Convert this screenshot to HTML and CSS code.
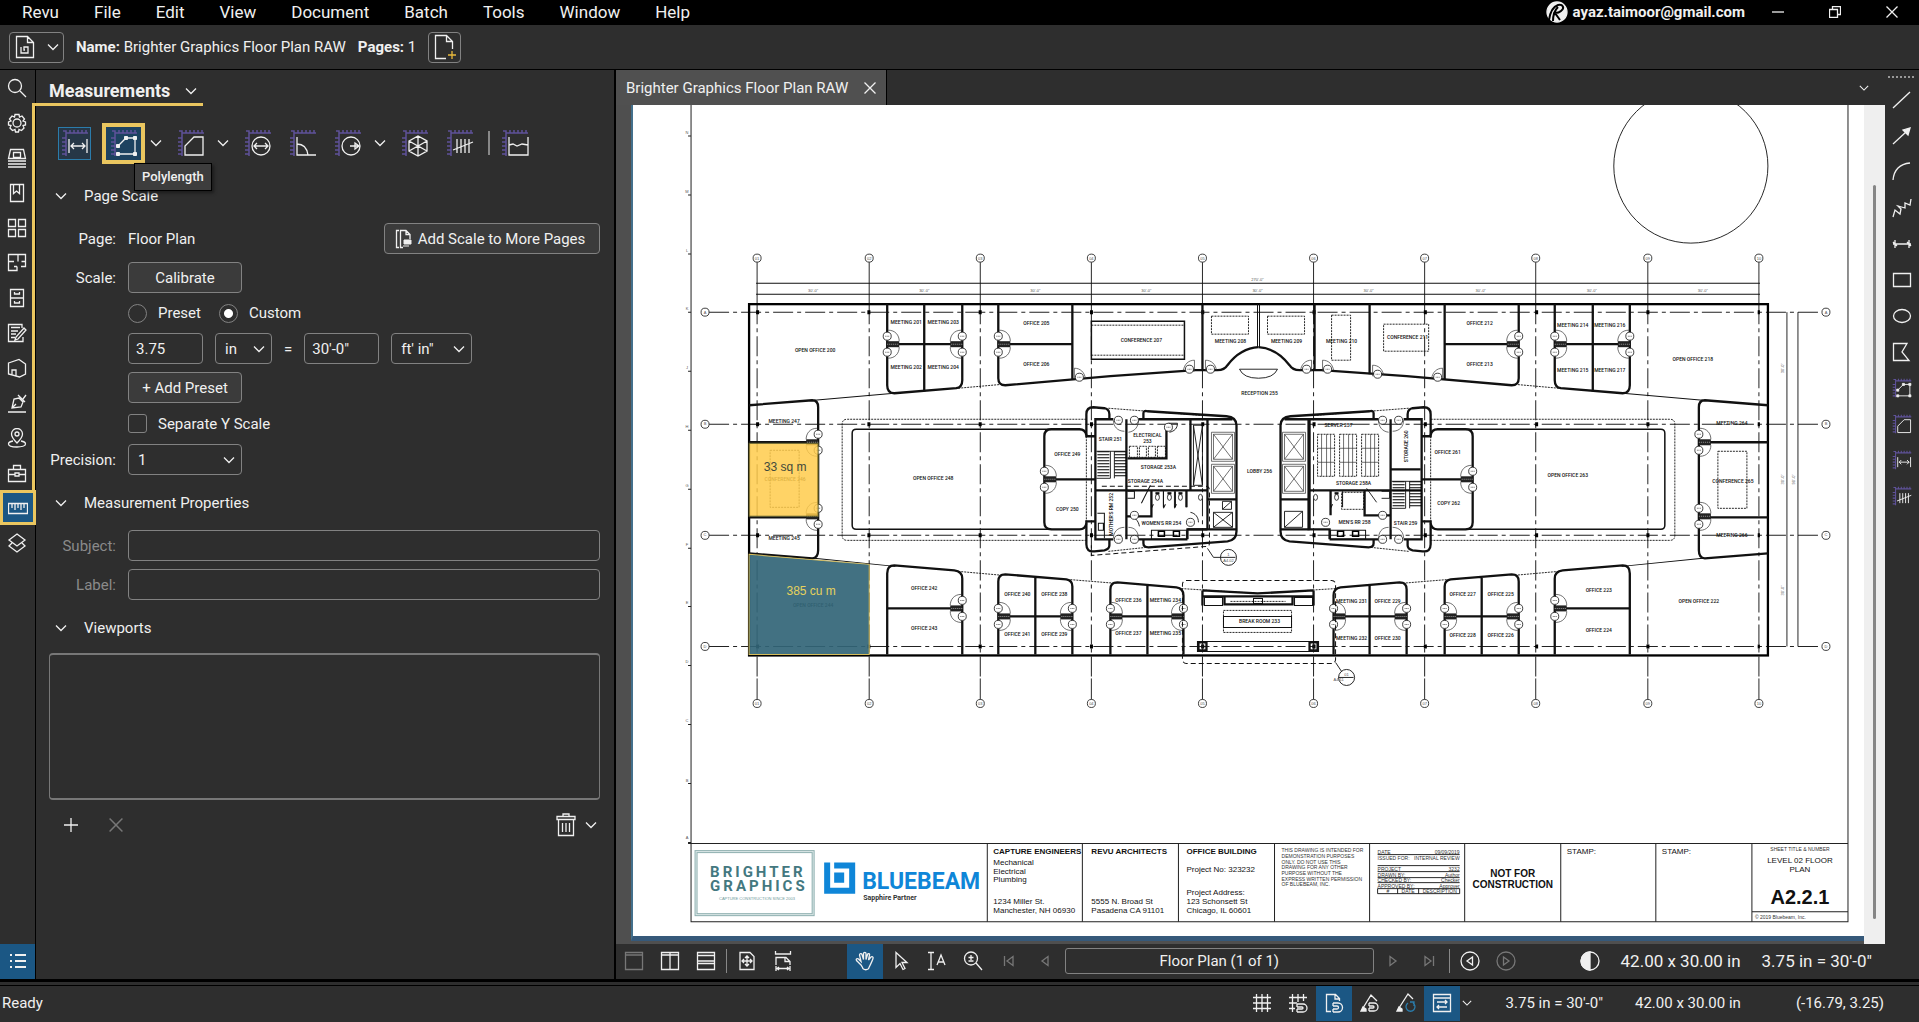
FILE: index.html
```html
<!DOCTYPE html>
<html lang="en">
<head>
    <meta charset="UTF-8">
    <meta name="viewport" content="width=device-width, initial-scale=1.0">
    <title>Brighter Graphics Floor Plan RAW</title>
    <link rel="stylesheet" href="styles.css">
</head>
<body>

    <!-- shared icons -->
    <svg class="sprite" width="0" height="0" aria-hidden="true">
        <symbol id="chevron" viewBox="0 0 12 12"><path d="M1 3.5l5 5 5-5"/></symbol>
        <symbol id="close" viewBox="0 0 12 12"><path d="M0.5 0.5l11 11M11.5 0.5l-11 11"/></symbol>
        <symbol id="ruler" viewBox="0 0 28 28">
            <path class="ruler" d="M5 27V4h22M1 9h4M1 13h4M1 17h4M1 21h4M1 25h4M9 4V1M13 4V1M17 4V1M21 4V1M25 4V1M2 2h3v3"/>
        </symbol>
        <symbol id="i-length" viewBox="0 0 28 28"><use href="#ruler"/><path d="M8 10v14M26 10v14M10 17h14M13 14l-3 3 3 3M21 14l3 3-3 3"/></symbol>
        <symbol id="i-poly" viewBox="0 0 28 28"><use href="#ruler"/><path d="M8 17l8-8h9v16H9"/><path class="solid small" d="M6.500 15.500h3v3h-3zM14.500 7.500h3v3h-3zM23.500 7.500h3v3h-3zM23.500 23.500h3v3h-3zM6.500 23.500h3v3h-3z"/></symbol>
        <symbol id="i-area" viewBox="0 0 28 28"><use href="#ruler"/><path d="M8 26V17l9-9h9v18z"/></symbol>
        <symbol id="i-diameter" viewBox="0 0 28 28"><use href="#ruler"/><circle cx="17" cy="17" r="9"/><path d="M10 17h14M13 14l-3 3 3 3M21 14l3 3-3 3"/></symbol>
        <symbol id="i-angle" viewBox="0 0 28 28"><use href="#ruler"/><path d="M8 8v18h19M8 15c6 0 10 4 11 11"/></symbol>
        <symbol id="i-radius" viewBox="0 0 28 28"><use href="#ruler"/><circle cx="17" cy="17" r="9"/><path d="M16 17h9M21 14l4 3-4 3z"/></symbol>
        <symbol id="i-volume" viewBox="0 0 28 28"><use href="#ruler"/><path d="M8 12l9-5 9 5v10l-9 5-9-5zM8 12l9 5 9-5M17 7v20M8 22l9-5 9 5"/></symbol>
        <symbol id="i-count" viewBox="0 0 28 28"><use href="#ruler"/><path d="M11 10v14M15 10v14M19 10v14M23 10v14M7 21l20-8"/></symbol>
        <symbol id="i-cutout" viewBox="0 0 28 28"><use href="#ruler"/><path d="M8 8v18h19V8M8 16l4-1 4 2 5-2 6 1"/></symbol>
    </svg>

    <header class="menubar">
        <nav class="menus">
            <button>Revu</button>
            <button>File</button>
            <button>Edit</button>
            <button>View</button>
            <button>Document</button>
            <button>Batch</button>
            <button>Tools</button>
            <button>Window</button>
            <button>Help</button>
        </nav>
        <div class="account">
            <svg width="22" height="22" viewBox="0 0 22 22"><circle class="solid" cx="11" cy="11" r="10"/><path class="cut" d="M3 19C4 12 6 6 12 4c5-1 7 3 3 6-2 2-5 2-6 2l5 7M7 20c0-6 2-11 5-14"/></svg>
            <span>ayaz.taimoor@gmail.com</span>
        </div>
        <div class="window-buttons">
            <button aria-label="Minimize"><svg width="12" height="12" viewBox="0 0 12 12"><path d="M0 6h12"/></svg></button>
            <button aria-label="Restore"><svg width="12" height="12" viewBox="0 0 12 12"><path d="M0.5 3.5h8v8h-8zM3.5 3.5v-3h8v8h-3"/></svg></button>
            <button aria-label="Close"><svg width="12" height="12"><use href="#close"/></svg></button>
        </div>
    </header>

    <div class="filebar">
        <button class="box file-type" aria-label="File type">
            <svg width="20" height="24" viewBox="0 0 20 24"><path d="M1.500 1.500h11l6 6v15h-17zM12.500 1.500v6h6M6 12v6h7v-6h-4v3h1"/></svg>
            <svg width="12" height="12"><use href="#chevron"/></svg>
        </button>
        <p><b>Name:</b> Brighter Graphics Floor Plan RAW</p>
        <p><b>Pages:</b> 1</p>
        <button class="box new-page" aria-label="New page">
            <svg width="22" height="26" viewBox="0 0 22 26"><path d="M12 24.500H1.500V1.500h11l6 6V15M12.500 1.500v6h6"/><path class="plus" d="M18 17v8M14 21h8"/></svg>
        </button>
    </div>

    <main class="workspace">
        <nav class="rail">
            <button aria-label="Search"><svg viewBox="0 0 20 20"><circle cx="8" cy="8" r="6.500"/><path d="M13 13l6 6"/></svg></button>
            <button aria-label="Properties"><svg viewBox="0 0 20 20"><circle cx="10" cy="10" r="4"/><path d="M8 1.500h4l.5 2.500 2.500-1 2.500 3-1.500 2 2.500 1v3l-2.500.5 1 2.500-2.500 2.500-2.500-1L11.500 19h-3L8 16.500l-2.500 1L3 15l1-2.500L1.500 12V9L4 8 2.500 6 5 3l2.500 1z"/></svg></button>
            <button aria-label="Properties sheet"><svg viewBox="0 0 20 20"><path d="M3.500 1.500h13l2 9h-17zM6.500 4.500h7v5h-7zM1 13h18M1 16h18M1 19h18"/></svg></button>
            <button aria-label="Bookmarks"><svg viewBox="0 0 20 20"><path d="M3.500 1.500h13v17h-13zM6.500 1.500v9l3-2.500 3 2.500v-9"/></svg></button>
            <button aria-label="Thumbnails"><svg viewBox="0 0 20 20"><path d="M1.500 1.500h7v7h-7zM11.500 1.500h7v7h-7zM1.500 11.500h7v7h-7zM11.500 11.500h7v7h-7z"/></svg></button>
            <button aria-label="Spaces"><svg viewBox="0 0 20 20"><path d="M7 8.500H1.500v-7h17v12H14M11 1.500v7M1.500 8.500v9H10v-4M7 13.500h3M14.500 8.500h4"/></svg></button>
            <button aria-label="File access"><svg viewBox="0 0 20 20"><path d="M3.500 1.500h13v17h-13zM3.500 10h13M7.500 4v2h5V4M7.500 13v2h5v-2"/></svg></button>
            <button aria-label="Markups"><svg viewBox="0 0 20 20"><path d="M15 5V1.500H1.500v17H16V14M4 4.500h9M4 8h7M4 11h5M4 14.500h4M17 5l2 2-8 9-3 1 1-3z"/></svg></button>
            <button aria-label="Forms"><svg viewBox="0 0 20 20"><path d="M1.500 5L12 1.500 18.500 6v10l-6 3-11-3zM5 17v-5h4v6"/></svg></button>
            <button aria-label="Signatures"><svg viewBox="0 0 20 20"><path d="M1 19h18M5 15l2-9 5-1 4 4-2 5zM5 15l4-4M11 2l7 7M16 6l3-4"/></svg></button>
            <button aria-label="Location"><svg viewBox="0 0 20 20"><path d="M10 15C6 11 4.500 8 4.500 6a5.500 5.500 0 0111 0c0 2-1.500 5-5.500 9zM6 13c-3 .5-4.500 1.500-4.500 3 0 4 17 4 17 0 0-1.500-1.500-2.500-4.500-3"/><circle cx="10" cy="6" r="2"/></svg></button>
            <button aria-label="Tool chest"><svg viewBox="0 0 20 20"><path d="M1.500 6.500h17v12h-17zM6.500 6.500v-4h7v4M1.500 11.500H8M12 11.500h6.500M8 10h4v3H8z"/></svg></button>
            <button class="active" aria-label="Measurements"><svg viewBox="0 0 20 20"><path d="M0.500 5.500h19v10H0.500zM4 6v4M7 6v6M10 6v4M13 6v6M16 6v4"/></svg></button>
            <button aria-label="Layers"><svg viewBox="0 0 20 20"><path d="M10 1l8 6-8 6-8-6zM5 10l-3 3 8 6 8-6-3-3"/></svg></button>
            <button class="list" aria-label="Markups list"><svg viewBox="0 0 20 20"><path class="bold" d="M2 4h2M7 4h11M2 10h2M7 10h11M2 16h2M7 16h11"/></svg></button>
        </nav>

        <section class="panel">
            <h1>Measurements <svg width="12" height="12"><use href="#chevron"/></svg></h1>

            <div class="tools">
                <button class="tool picked" aria-label="Length"><svg width="28" height="28"><use href="#i-length"/></svg></button>
                <button class="tool marked" aria-label="Polylength"><svg width="28" height="28"><use href="#i-poly"/></svg></button>
                <svg class="more" width="12" height="12"><use href="#chevron"/></svg>
                <button class="tool" aria-label="Area"><svg width="28" height="28"><use href="#i-area"/></svg></button>
                <svg class="more" width="12" height="12"><use href="#chevron"/></svg>
                <button class="tool" aria-label="Diameter"><svg width="28" height="28"><use href="#i-diameter"/></svg></button>
                <button class="tool" aria-label="Angle"><svg width="28" height="28"><use href="#i-angle"/></svg></button>
                <button class="tool" aria-label="Radius"><svg width="28" height="28"><use href="#i-radius"/></svg></button>
                <svg class="more" width="12" height="12"><use href="#chevron"/></svg>
                <button class="tool" aria-label="Volume"><svg width="28" height="28"><use href="#i-volume"/></svg></button>
                <button class="tool" aria-label="Count"><svg width="28" height="28"><use href="#i-count"/></svg></button>
                <i class="sep"></i>
                <button class="tool" aria-label="Cutout"><svg width="28" height="28"><use href="#i-cutout"/></svg></button>
                <span class="tooltip">Polylength</span>
            </div>

            <h2><svg width="12" height="12"><use href="#chevron"/></svg>Page Scale</h2>
            <div class="form">
                <span class="name">Page:</span>
                <div class="line spread">
                    <span>Floor Plan</span>
                    <button class="box add-scale">
                        <svg width="18" height="20" viewBox="0 0 18 20"><path d="M4 1.500H1.500v17H4M8 18.500H5.500v-17H11l4 4V10M11 1.500v4h4"/><path class="solid small" d="M9 11h7v4H9zM8 17h6"/></svg>
                        Add Scale to More Pages
                    </button>
                </div>

                <span class="name">Scale:</span>
                <div class="line"><button class="box wide">Calibrate</button></div>

                <div class="line radios">
                    <label><input type="radio" name="scale"> Preset</label>
                    <label><input type="radio" name="scale" checked> Custom</label>
                </div>

                <div class="line scale-values">
                    <input class="field" type="text" value="3.75" aria-label="Page distance">
                    <span class="select in">
                        <select aria-label="Page unit"><option>in</option></select>
                        <svg width="12" height="12"><use href="#chevron"/></svg>
                    </span>
                    <span>=</span>
                    <input class="field" type="text" value="30'-0&quot;" aria-label="Real distance">
                    <span class="select ft">
                        <select aria-label="Real unit"><option>ft' in"</option></select>
                        <svg width="12" height="12"><use href="#chevron"/></svg>
                    </span>
                </div>

                <div class="line"><button class="box wide">+ Add Preset</button></div>

                <div class="line check"><label><input type="checkbox"> Separate Y Scale</label></div>

                <label class="name" for="precision">Precision:</label>
                <div class="line">
                    <span class="select wide">
                        <select id="precision"><option>1</option></select>
                        <svg width="12" height="12"><use href="#chevron"/></svg>
                    </span>
                </div>
            </div>

            <h2><svg width="12" height="12"><use href="#chevron"/></svg>Measurement Properties</h2>
            <div class="form">
                <label class="name off" for="subject">Subject:</label>
                <input class="field" id="subject" type="text">
                <label class="name off" for="label">Label:</label>
                <input class="field" id="label" type="text">
            </div>

            <h2><svg width="12" height="12"><use href="#chevron"/></svg>Viewports</h2>
            <div class="viewports"></div>
            <div class="viewport-tools">
                <button aria-label="Add viewport"><svg width="14" height="14" viewBox="0 0 14 14"><path d="M7 0v14M0 7h14"/></svg></button>
                <button class="off" aria-label="Remove viewport"><svg width="14" height="14"><use href="#close"/></svg></button>
                <button class="trash" aria-label="Delete">
                    <svg width="20" height="24" viewBox="0 0 20 24"><path d="M1 3.500h18v3H1zM7 3.500V1h6v2.500M2.500 7v15.500h15V7M6.500 10v9M10 10v9M13.500 10v9"/></svg>
                    <svg width="12" height="12"><use href="#chevron"/></svg>
                </button>
            </div>
        </section>

        <section class="document">
            <div class="tabs">
                <div class="tab">Brighter Graphics Floor Plan RAW
                    <button aria-label="Close tab"><svg width="12" height="12"><use href="#close"/></svg></button>
                </div>
                <button class="tab-list" aria-label="Tabs"><svg width="10" height="10"><use href="#chevron"/></svg></button>
            </div>

            <div class="view">
                <div class="sheet">
                    <svg class="plan" viewBox="633 105 1230 830" preserveAspectRatio="xMinYMin meet">
                        <defs>
                            <!-- pair of doors, wall on the left -->
                            <g id="doors">
                                <path class="thin" d="M1 -14c7 0 11 5 11 11M1 14c7 0 11-5 11-11"/>
                                <path class="wall gap" d="M0 -12v8M0 4v8"/>
                                <rect class="slab" x="0" y="-3" width="12" height="6"/>
                                <path class="slab-mark" d="M0 0h12"/>
                                <circle class="tag" cx="0" cy="-8" r="4"/>
                                <circle class="tag" cx="0" cy="8" r="4"/>
                                <path class="mark" d="M-2 -8h4M-2 8h4"/>
                            </g>
                            <g id="door">
                                <path class="thin" d="M0 -11V0M0 -11c6 0 10 4 11 10"/>
                                <circle class="tag" cx="5" cy="-2" r="4"/>
                                <path class="mark" d="M3 -2h4"/>
                            </g>
                            <g id="tag"><circle class="tag" cx="0" cy="0" r="4"/><path class="mark" d="M-2 0h4"/></g>
                            <g id="lift"><path class="thin" d="M0 0h23v29H0zM2 2h19v25H2zM2 2l19 25M21 2L2 27"/></g>
                            <g id="stairs">
                                <path class="steps" d="M7 0v27"/>
                                <path class="steps" d="M24 0v27"/>
                                <path class="thin dark" d="M14 0v27M18 0v27M0 27h14M0 0h29"/>
                            </g>
                            <g id="wc"><path class="line" d="M-6 0v16M6 0v16M-4 13l-2 4"/><ellipse class="tag" cx="0" cy="6" rx="2" ry="3"/><path class="wall" d="M-2 2h4"/></g>
                            <g id="rack"><path class="dots" d="M0 0h17v42H0z"/><path class="thin" d="M4 0v42M13 0v42M0 14h17M0 28h17M9 0v42"/></g>

                            <!-- half of the building; the other half is its mirror -->
                            <g id="half">
                                <path class="wall" d="M887 304V385q0 8 7 8L956 388q6-1 6-8V304M998 304V378q0 7 7 7L1110 376 1195 370H1217Q1224 370 1227 365 1240 348 1258 347"/>
                                <path class="wall" d="M924 304V391M887 344H962M998 344H1072M1072 304V379M1202 304V370"/>
                                <path class="wall" d="M749 405L812 400q6 0 6 7V550q0 8-6 8L749 553"/>
                                <path class="wall" d="M749 442H818M749 517H818"/>
                                <path class="line" d="M814 400L894 393M814 558L895 566M1257 304V347"/>
                                <path class="dots" d="M958 388L1003 384M958 571L1003 575M1067 579L1116 583M1178 588L1257 593"/>
                                <path class="wall" d="M887 654V573q0-8 7-8L954 570q8 1 8 8V654M998 654V581q0-7 7-7L1066 579q6 1 6 7V654M1035 577V654M998 616H1072"/>
                                <path class="wall" d="M1110 654V589q0-7 7-7L1176 587q7 1 7 8V654M1147 585V654M1110 616H1183"/>
                                <path class="frame" d="M1051 429H856q-4 0-4 4V525q0 4 4 4H1051"/>
                                <path class="dots" d="M1086 419H847q-5 0-5 5V535q0 5 5 5H1086M1086 430V530"/>
                                <path class="wall" d="M1086 435q-1-6-7-6H1051q-7 0-7 7V522q0 7 7 7H1079q6 0 7-6M1044 479H1095"/>
                                <path class="wall" d="M1095 436H1086V414q0-7 7-7L1104 408q5 1 5 6V419M1143 419V413q0-3 4-2L1226 416q10 1 10 9V531q0 9-9 10L1148 547q-5 0-5-4V539"/>
                                <path class="wall" d="M1095 521H1086V544q0 8 8 7L1104 550q5-1 5-5V539"/>
                                <path class="dots" d="M1108 408L1200 415M1108 551L1146 547"/>
                                <path class="wall" d="M1138 419H1190M1113 419H1095V539H1113M1138 539H1187M1126 419V539M1190 419H1232M1187 539V529H1236M1095 490H1208M1207 419V530M1207 499H1236"/>
                                <use href="#lift" x="1211" y="432"/>
                                <use href="#lift" x="1211" y="464"/>
                                <use href="#doors" x="1044" y="479"/>
                                <use href="#doors" x="998" y="344"/>
                                <use href="#doors" x="887" y="344"/>
                                <use href="#doors" transform="translate(962 344) scale(-1 1)"/>
                                <use href="#doors" transform="translate(818 442) scale(-1 1)"/>
                                <use href="#doors" transform="translate(818 516) scale(-1 1)"/>
                                <path class="wall" d="M887 608H962"/>
                                <use href="#doors" transform="translate(962 608) scale(-1 1)"/>
                                <use href="#doors" x="998" y="616"/>
                                <use href="#doors" transform="translate(1072 616) scale(-1 1)"/>
                                <use href="#doors" x="1110" y="616"/>
                                <use href="#doors" transform="translate(1183 616) scale(-1 1)"/>
                                <use href="#door" x="1074" y="379"/>
                                <use href="#door" transform="translate(1194 371) scale(-1 1)"/>
                                <use href="#door" x="1205" y="371"/>
                                <path class="thin" d="M1113 420c0 6 4 11 11 11M1138 420c0 6-3 11-10 12M1113 538c0-6 4-11 11-11M1138 538c0-6-3-11-10-11"/>
                                <use href="#tag" x="1118" y="420"/><use href="#tag" x="1134" y="420"/>
                                <use href="#tag" x="1118" y="539"/><use href="#tag" x="1134" y="539"/>
                                <path class="line" d="M1151 530h35v9h-35z"/>
                                <path class="sink" d="M1158 531h6v5h-6zM1173 531h6v5h-6z"/>
                            </g>
                        </defs>

                        <!-- sheet border -->
                        <path class="border" d="M691 105V921H1847V105"/>
                        <path class="border" d="M688 136h3M688 195h3M688 254h3M688 312h3M688 371h3M688 430h3M688 489h3M688 548h3M688 606h3M688 665h3M688 724h3M688 783h3M688 842h3"/>
                        <g class="tiny">
                            <text x="687" y="134">N</text><text x="687" y="193">M</text><text x="687" y="252">L</text>
                            <text x="687" y="310">K</text><text x="687" y="369">J</text><text x="687" y="428">H</text>
                            <text x="687" y="487">G</text><text x="687" y="546">F</text><text x="687" y="604">E</text>
                            <text x="687" y="663">D</text><text x="687" y="722">C</text><text x="687" y="781">B</text>
                            <text x="687" y="838">A</text>
                        </g>
                        <circle class="thin dark" cx="1690" cy="166" r="77"/>

                        <!-- column grid -->
                        <path class="thin dark" d="M757 262V303M869 262V303M980 262V303M1091 262V303M1202 262V303M1313 262V303M1424 262V303M1535 262V303M1647 262V303M1758 262V303M757 678V699M869 678V699M980 678V699M1091 678V699M1202 678V699M1313 678V699M1424 678V699M1535 678V699M1647 678V699M1758 678V699"/>
                        <path class="axis" d="M757 304V678M869 304V678M980 304V678M1091 304V678M1202 304V678M1313 304V678M1424 304V678M1535 304V678M1647 304V678M1758 304V678"/>
                        <path class="axis" d="M709 312H1821M709 424H1821M709 535H1821M709 646H1821"/>
                        <path class="line" d="M756 283H1759M756 294H1759"/>
                        <path class="thin dark" d="M1786 312V646M1797 312V646"/>
                        <g class="bubbles">
                            <circle cx="757" cy="258" r="4"/><circle cx="869" cy="258" r="4"/><circle cx="980" cy="258" r="4"/><circle cx="1091" cy="258" r="4"/><circle cx="1202" cy="258" r="4"/>
                            <circle cx="1313" cy="258" r="4"/><circle cx="1424" cy="258" r="4"/><circle cx="1535" cy="258" r="4"/><circle cx="1647" cy="258" r="4"/><circle cx="1758" cy="258" r="4"/>
                            <circle cx="757" cy="703" r="4"/><circle cx="869" cy="703" r="4"/><circle cx="980" cy="703" r="4"/><circle cx="1091" cy="703" r="4"/><circle cx="1202" cy="703" r="4"/>
                            <circle cx="1313" cy="703" r="4"/><circle cx="1424" cy="703" r="4"/><circle cx="1535" cy="703" r="4"/><circle cx="1647" cy="703" r="4"/><circle cx="1758" cy="703" r="4"/>
                            <circle cx="705" cy="312" r="4"/><circle cx="705" cy="424" r="4"/><circle cx="705" cy="535" r="4"/><circle cx="705" cy="646" r="4"/>
                            <circle cx="1825" cy="312" r="4"/><circle cx="1825" cy="424" r="4"/><circle cx="1825" cy="535" r="4"/><circle cx="1825" cy="646" r="4"/>
                        </g>
                        <g class="tiny">
                            <text x="757" y="260">01</text><text x="869" y="260">02</text><text x="980" y="260">03</text><text x="1091" y="260">04</text><text x="1202" y="260">05</text>
                            <text x="1313" y="260">06</text><text x="1424" y="260">07</text><text x="1535" y="260">08</text><text x="1647" y="260">09</text><text x="1758" y="260">10</text>
                            <text x="757" y="705">01</text><text x="869" y="705">02</text><text x="980" y="705">03</text><text x="1091" y="705">04</text><text x="1202" y="705">05</text>
                            <text x="1313" y="705">06</text><text x="1424" y="705">07</text><text x="1535" y="705">08</text><text x="1647" y="705">09</text><text x="1758" y="705">10</text>
                            <text x="705" y="314">A</text><text x="705" y="425">B</text><text x="705" y="536">C</text><text x="705" y="648">D</text>
                            <text x="1825" y="314">A</text><text x="1825" y="425">B</text><text x="1825" y="536">C</text><text x="1825" y="648">D</text>
                            <text x="813" y="292">30'-0"</text><text x="924" y="292">30'-0"</text><text x="1035" y="292">30'-0"</text><text x="1146" y="292">30'-0"</text><text x="1257" y="292">30'-0"</text>
                            <text x="1368" y="292">30'-0"</text><text x="1480" y="292">30'-0"</text><text x="1591" y="292">30'-0"</text><text x="1702" y="292">30'-0"</text><text x="1257" y="281">270'-0"</text>
                            <text transform="translate(1783 368) rotate(-90)">30'-0"</text><text transform="translate(1783 479) rotate(-90)">30'-0"</text><text transform="translate(1783 590) rotate(-90)">30'-0"</text><text transform="translate(1794 479) rotate(-90)">90'-0"</text>
                        </g>
                        <path class="posts" d="M756 312h1003M756 424h1003M756 535h1003M756 646h1003"/>

                        <rect class="outer" x="749" y="304" width="1018" height="351"/>
                        <use href="#half"/>
                        <use href="#half" transform="translate(2516 0) scale(-1 1)"/>

                        <!-- top middle rooms -->
                        <path class="frame" d="M1091 321h93v38h-93z"/>
                        <path class="dots" d="M1091 325h93M1091 355h93M1211 316h37v18h-37zM1267 316h37v18h-37zM1331 315h19v45h-19zM1383 324h45v27h-45z"/>
                        <path class="wall" d="M1369 304V374"/>
                        <use href="#door" x="1372" y="376"/>
                        <path class="thin dark" d="M1239 369h38q-4 9-19 9t-19-9z"/>
                        <path class="dots" d="M1717 451h29v57h-29zM770 450h29v57h-29z"/>

                        <!-- left core -->
                        <path class="wall" d="M1190 419V490M1127 458H1166V427M1151 490V516H1126M1186 490V507M1187 529h20"/>
                        <path class="thin dark" d="M1193 425h9v60h-9zM1193 425l9 60M1202 425l-9 60M1213 512h19v15h-19zM1213 512l19 15M1232 512l-19 15M1222 501h9v8h-9zM1222 509l9-8M1168 423h9c0 5-3 8-8 9M1190 512c5 1 8 5 8 10M1128 516c6 0 10 4 11 10"/>
                        <path class="dots" d="M1129 446h8v11h-8zM1139 446h7v11h-7zM1148 446h7v11h-7zM1157 446h8v11h-8z"/>
                        <use href="#stairs" x="1096" y="451"/>
                        <use href="#wc" x="1157" y="491"/><use href="#wc" x="1169" y="491"/><use href="#wc" x="1180" y="491"/>
                        <ellipse class="tag" cx="1200" cy="497" rx="2" ry="3"/>
                        <use href="#tag" x="1168" y="427"/><use href="#tag" x="1190" y="522"/><use href="#tag" x="1134" y="515"/>
                        <path class="line" d="M1097 513h7v25M1098 523h5v7h-5zM1150 485l-9 18M1127 491h7v7h-7"/>
                        <path class="dashes" d="M1091 545V555L1207 546q2-1 2-3V490q0-4-4-4H1100"/>

                        <!-- right core -->
                        <path class="wall" d="M1308 419V530M1390 469H1420M1330 490V515M1364 490V515H1390"/>
                        <use href="#rack" x="1317" y="434"/><use href="#rack" x="1339" y="434"/><use href="#rack" x="1361" y="434"/>
                        <use href="#stairs" x="1391" y="481"/>
                        <use href="#wc" x="1336" y="491"/>
                        <ellipse class="tag" cx="1315" cy="497" rx="2" ry="3"/>
                        <use href="#tag" x="1325" y="522"/><use href="#tag" x="1382" y="515"/>
                        <path class="dots" d="M1341 492h22v17h-22z"/>
                        <path class="thin dark" d="M1284 511h18v16h-18zM1284 527l18-16M1366 488l10 14M1381 491h8v7h-8"/>

                        <!-- break room -->
                        <rect class="dashes" x="1182" y="580" width="153" height="83" rx="4"/>
                        <path class="wall" d="M1202 590V605M1313 590V605M1202 590L1257 593 1313 590M1202 596H1313M1224 596v8h68v-8"/>
                        <path class="line" d="M1204 597h18v8h-18zM1294 597h18v8h-18zM1253 598h9v5h-9zM1223 616h68v11h-68zM1197 641h121v10h-121z"/>
                        <path class="dots" d="M1230 601h55M1223 610h68v22h-68z"/>
                        <path class="wall" d="M1198 642h8v8h-8zM1309 642h8v8h-8zM1202 644v4M1313 644v4"/>
                        <path class="thin dark" d="M1207 548l6 9h7M1220 557h15M1335 662l6 9M1338 677h15"/>
                        <circle class="thin dark" cx="1228" cy="557" r="8"/>
                        <circle class="thin dark" cx="1346" cy="677" r="8"/>
                        <g class="tiny"><text x="1228" y="556">1</text><text x="1228" y="562">A4.02</text><text x="1346" y="676">01</text><text x="1338" y="681">A4.11</text></g>

                        <g class="rooms">
                            <text x="815" y="352">OPEN OFFICE 200</text>
                            <text x="906" y="324">MEETING 201</text><text x="943" y="324">MEETING 203</text>
                            <text x="906" y="369">MEETING 202</text><text x="943" y="369">MEETING 204</text>
                            <text x="1036" y="325">OFFICE 205</text><text x="1036" y="366">OFFICE 206</text>
                            <text x="1141" y="342">CONFERENCE 207</text>
                            <text x="1230" y="343">MEETING 208</text><text x="1286" y="343">MEETING 209</text>
                            <text x="1341" y="343">MEETING 210</text><text x="1407" y="339">CONFERENCE 211</text>
                            <text x="1479" y="325">OFFICE 212</text><text x="1479" y="366">OFFICE 213</text>
                            <text x="1572" y="327">MEETING 214</text><text x="1609" y="327">MEETING 216</text>
                            <text x="1572" y="372">MEETING 215</text><text x="1609" y="372">MEETING 217</text>
                            <text x="1692" y="361">OPEN OFFICE 218</text>
                            <text x="1259" y="395">RECEPTION 255</text>
                            <text x="784" y="423">MEETING 247</text><text x="784" y="540">MEETING 245</text>
                            <text x="933" y="480">OPEN OFFICE 248</text><text x="1567" y="477">OPEN OFFICE 263</text>
                            <text x="1067" y="456">OFFICE 249</text><text x="1067" y="511">COPY 250</text>
                            <text x="1447" y="454">OFFICE 261</text><text x="1448" y="505">COPY 262</text>
                            <text x="1110" y="441">STAIR 251</text><text x="1147" y="437">ELECTRICAL</text><text x="1147" y="443">253</text>
                            <text x="1158" y="469">STORAGE 253A</text><text x="1145" y="483">STORAGE 254A</text>
                            <text x="1161" y="525">WOMEN'S RR 254</text>
                            <text transform="translate(1113 514) rotate(-90)">MOTHER'S RM 252</text>
                            <text x="1259" y="473">LOBBY 256</text>
                            <text x="1338" y="427">SERVER 257</text><text x="1353" y="485">STORAGE 258A</text>
                            <text x="1354" y="524">MEN'S RR 258</text><text x="1405" y="525">STAIR 259</text>
                            <text transform="translate(1407 446) rotate(-90)">STORAGE 260</text>
                            <text x="1731" y="425">MEETING 264</text><text x="1732" y="483">CONFERENCE 265</text><text x="1731" y="537">MEETING 266</text>
                            <text x="924" y="590">OFFICE 242</text><text x="924" y="630">OFFICE 243</text>
                            <text x="1017" y="596">OFFICE 240</text><text x="1054" y="596">OFFICE 238</text>
                            <text x="1017" y="636">OFFICE 241</text><text x="1054" y="636">OFFICE 239</text>
                            <text x="1128" y="602">OFFICE 236</text><text x="1165" y="602">MEETING 234</text>
                            <text x="1128" y="635">OFFICE 237</text><text x="1165" y="635">MEETING 235</text>
                            <text x="1259" y="623">BREAK ROOM 233</text>
                            <text x="1351" y="603">MEETING 231</text><text x="1387" y="603">OFFICE 229</text>
                            <text x="1351" y="640">MEETING 232</text><text x="1387" y="640">OFFICE 230</text>
                            <text x="1462" y="596">OFFICE 227</text><text x="1500" y="596">OFFICE 225</text>
                            <text x="1462" y="637">OFFICE 228</text><text x="1500" y="637">OFFICE 226</text>
                            <text x="1598" y="592">OFFICE 223</text><text x="1598" y="632">OFFICE 224</text>
                            <text x="1698" y="603">OPEN OFFICE 222</text>
                            <text x="785" y="481">CONFERENCE 246</text><text x="813" y="607">OPEN OFFICE 244</text>
                        </g>

                        <!-- measured areas -->
                        <path class="area-yellow" d="M749 443H818V516H749z"/>
                        <path class="area-blue" d="M749 554L869 564V654H749z"/>
                        <text class="value" x="785" y="471">33 sq m</text>
                        <text class="value gold" x="811" y="595">385 cu m</text>

                        <!-- title block -->
                        <path class="border" d="M688 843H1847M987 843V921M1082 843V921M1178 843V921M1274 843V921M1369 843V921M1464 843V921M1560 843V921M1655 843V921M1751 843V921M1751 911H1847"/>
                        <rect class="logo-frame" x="696" y="851" width="117" height="63"/>
                        <rect class="logo-line" x="696" y="851" width="117" height="63"/>
                        <g class="brighter"><text x="710" y="876">BRIGHTER</text><text x="710" y="890">GRAPHICS</text></g>
                        <text class="tagline" x="719" y="899">CAPTURE CONSTRUCTION SINCE 2003</text>
                        <path class="blue-fill" d="M824 862h6v25h19v-19h-15v-6h21v31h-31zM834 872h10v10h-10z"/>
                        <text class="bluebeam" x="862" y="888">BLUEBEAM</text>
                        <text class="partner" x="863" y="899">Sapphire Partner</text>
                        <g class="head"><text x="993" y="853">CAPTURE ENGINEERS</text><text x="1091" y="853">REVU ARCHITECTS</text><text x="1186" y="853">OFFICE BUILDING</text></g>
                        <g class="info">
                            <text x="993" y="864">Mechanical</text><text x="993" y="873">Electrical</text><text x="993" y="881">Plumbing</text>
                            <text x="993" y="903">1234 Miller St.</text><text x="993" y="912">Manchester, NH 06930</text>
                            <text x="1091" y="903">5555 N. Broad St</text><text x="1091" y="912">Pasadena CA 91101</text>
                            <text x="1186" y="871">Project No: 323232</text><text x="1186" y="894">Project Address:</text>
                            <text x="1186" y="903">123 Schonsett St</text><text x="1186" y="912">Chicago, IL 60601</text>
                            <text x="1566" y="853">STAMP:</text><text x="1661" y="853">STAMP:</text>
                            <text class="mid" x="1799" y="862">LEVEL 02 FLOOR</text><text class="mid" x="1799" y="871">PLAN</text>
                        </g>
                        <g class="fine">
                            <text x="1281" y="851">THIS DRAWING IS INTENDED FOR</text><text x="1281" y="857">DEMONSTRATION PURPOSES</text>
                            <text x="1281" y="863">ONLY. DO NOT USE THIS</text><text x="1281" y="868">DRAWING FOR ANY OTHER</text>
                            <text x="1281" y="874">PURPOSE WITHOUT THE</text><text x="1281" y="880">EXPRESS WRITTEN PERMISSION</text>
                            <text x="1281" y="885">OF BLUEBEAM, INC.</text>
                            <text x="1377" y="853">DATE</text><text class="end" x="1459" y="853">09/09/2019</text>
                            <text x="1377" y="859">ISSUED FOR:</text><text class="end" x="1459" y="859">INTERNAL REVIEW</text>
                            <text x="1377" y="870">PROJECT</text><text class="end" x="1459" y="870">3232</text>
                            <text x="1377" y="876">DRAWN BY:</text><text class="end" x="1459" y="876">Author</text>
                            <text x="1377" y="881">CHECKED BY:</text><text class="end" x="1459" y="881">Checker</text>
                            <text x="1377" y="887">APPROVED BY:</text><text class="end" x="1459" y="887">Approver</text>
                            <text x="1386" y="892">#</text><text x="1401" y="892">DATE</text><text x="1422" y="892">DESCRIPTION</text>
                            <text class="mid" x="1799" y="850">SHEET TITLE &amp; NUMBER</text>
                            <text x="1754" y="918">© 2019 Bluebeam, Inc.</text>
                        </g>
                        <path class="thin dark" d="M1377 854h82M1377 865h82M1377 871h82M1377 877h82M1377 882h82M1377 888h82v5h-82zM1397 888v5M1418 888v5"/>
                        <g class="notice"><text x="1512" y="876">NOT FOR</text><text x="1512" y="887">CONSTRUCTION</text></g>
                        <text class="number" x="1799" y="903">A2.2.1</text>
                    </svg>
                </div>
                <div class="scroll"><i></i></div>
            </div>

            <div class="viewbar">
                <button class="off" aria-label="Single"><svg viewBox="0 0 20 20"><path d="M1.500 1.500h17v17h-17zM1.500 4h17"/></svg></button>
                <button aria-label="Split vertical"><svg viewBox="0 0 20 20"><path d="M1.500 1.500h17v17h-17zM10 1.500v17M1.500 4h17"/></svg></button>
                <button aria-label="Split horizontal"><svg viewBox="0 0 20 20"><path d="M1.500 1.500h17v17h-17zM1.500 4.500h17M1.500 10h17M1.500 12.500h17"/></svg></button>
                <i class="sep"></i>
                <button aria-label="Fit page"><svg viewBox="0 0 20 20"><path d="M3 1.500h10l4 4v13H3zM10 5v10M5 10h10M8 7l2-2 2 2M8 13l2 2 2-2M7 8l-2 2 2 2M13 8l2 2-2 2"/></svg></button>
                <button aria-label="Fit width"><svg viewBox="0 0 20 20"><path d="M2.500 0v3h15V0M3 14V6.500h10l4 4V14M12 6.500v4h5M3 15v5M17 15v5M4 17.500h12M6 16l-2 1.500L6 19M14 16l2 1.500-2 1.500"/></svg></button>
                <button class="on hand" aria-label="Pan"><svg viewBox="0 0 20 20"><path d="M6 14L1.500 9.500C.5 8 2.500 7 3.500 8L6 10.500 4.500 4c0-1.500 2-2 2.500-.5l1.500 5V2.500c0-1.500 2.500-1.500 2.500 0v6l1.500-5c.5-1.500 2.500-1 2 .5L13.500 9 16 6c1-1 2.500 0 2 1.500-1 3-2.500 6-4 9-.5 3-6 3-6.500 0z"/></svg></button>
                <button aria-label="Select"><svg viewBox="0 0 20 20"><path d="M5 1.500v15l4-4 3 6 2-1-3-6h5z"/></svg></button>
                <button aria-label="Select text"><svg viewBox="0 0 20 20"><path d="M1 1.500h6M4 1.500v17M1 18.500h6M10 14l4-10 4 10M11.500 11h5"/></svg></button>
                <button aria-label="Zoom"><svg viewBox="0 0 20 20"><circle cx="8" cy="7.500" r="6.500"/><path d="M13 12l6 7M8 4v5M5.500 6.500h5M5.500 10h5"/></svg></button>
                <button class="off" aria-label="First page"><svg viewBox="0 0 20 20"><path d="M5.500 5v10M14 5.500v9L8 10z"/></svg></button>
                <button class="off" aria-label="Previous page"><svg viewBox="0 0 20 20"><path d="M13 5.500v9L7 10z"/></svg></button>
                <input class="page-name" type="text" value="Floor Plan (1 of 1)" aria-label="Page">
                <button class="off" aria-label="Next page"><svg viewBox="0 0 20 20"><path d="M7 5.500v9l6-4.500z"/></svg></button>
                <button class="off" aria-label="Last page"><svg viewBox="0 0 20 20"><path d="M14.500 5v10M6 5.500v9l6-4.500z"/></svg></button>
                <i class="sep"></i>
                <button aria-label="Previous view"><svg viewBox="0 0 20 20"><circle cx="10" cy="10" r="9"/><path d="M12.500 6v8L7 10z"/></svg></button>
                <button class="off" aria-label="Next view"><svg viewBox="0 0 20 20"><circle cx="10" cy="10" r="9"/><path d="M7.500 6v8l5.500-4z"/></svg></button>
                <div class="page-size">
                    <svg viewBox="0 0 20 20"><circle cx="10" cy="10" r="9"/><path class="solid" d="M10 1a9 9 0 000 18z"/></svg>
                    <span>42.00 x 30.00 in</span>
                    <span>3.75 in = 30'-0"</span>
                </div>
            </div>
        </section>

        <nav class="rail shapes">
            <i class="grip"></i>
            <button aria-label="Line"><svg viewBox="0 0 20 20"><path d="M1 18L18 2"/></svg></button>
            <button aria-label="Arrow"><svg viewBox="0 0 20 20"><path d="M1 18L14 6"/><path class="solid" d="M18 2l-2 7-5-5z"/></svg></button>
            <button aria-label="Arc"><svg viewBox="0 0 20 20"><path d="M1 18C2 8 8 2 18 1"/></svg></button>
            <button aria-label="Polyline"><svg viewBox="0 0 20 20"><path d="M1 19l2-7 5 4 1-5-3-3 7 2V5l5 2 1-6"/></svg></button>
            <button aria-label="Dimension"><svg viewBox="0 0 20 20"><path d="M3 6v8M17 6v8M1 10h18M1 8l4 4M15 8l4 4"/></svg></button>
            <button aria-label="Rectangle"><svg viewBox="0 0 20 20"><path d="M1.500 3.500h17v13h-17z"/></svg></button>
            <button aria-label="Ellipse"><svg viewBox="0 0 20 20"><ellipse cx="10" cy="10" rx="8.500" ry="6.500"/></svg></button>
            <button aria-label="Polygon"><svg viewBox="0 0 20 20"><path d="M1.500 1.500H15L10 10l7 8.500H1.500z"/></svg></button>
            <button aria-label="Polylength"><svg viewBox="0 0 28 28"><use href="#i-poly"/></svg></button>
            <button aria-label="Area"><svg viewBox="0 0 28 28"><use href="#i-area"/></svg></button>
            <button aria-label="Length"><svg viewBox="0 0 28 28"><use href="#i-length"/></svg></button>
            <button aria-label="Count"><svg viewBox="0 0 28 28"><use href="#i-count"/></svg></button>
        </nav>
    </main>

    <footer class="status">
        <span class="ready">Ready</span>
        <button aria-label="Grid"><svg viewBox="0 0 20 20"><path d="M4.500 1v18M10 1v18M15.500 1v18M1 4.500h18M1 10h18M1 15.500h18"/></svg></button>
        <button aria-label="Snap to grid"><svg viewBox="0 0 20 20"><path d="M4.500 1v18M10 1v8M15.500 1v7M1 4.500h18M1 10h8M1 15.500h6M9 11h6a4 4 0 010 8H9M9 14h5a1 1 0 010 2H9M9 11v3M9 16v3"/></svg></button>
        <button class="on" aria-label="Snap to content"><svg viewBox="0 0 20 20"><path d="M7 18.500H2.500v-17h9l4 4V8M11 1.500v4.500h4.500M9 10h5a4 4 0 010 9H9M9 13h4a1 1 0 010 3H9M9 10v3M9 16v3"/></svg></button>
        <button aria-label="Snap to markup"><svg viewBox="0 0 20 20"><path d="M3 15L11 2l6 6M9 10h5a4 4 0 010 8H9M9 13h4a1 1 0 010 2H9M9 10v3M9 15v3"/><path class="solid" d="M1 18l2-4 3 2v2z"/></svg></button>
        <button aria-label="Reuse"><svg viewBox="0 0 20 20"><path d="M3 15L12 1l5 5"/><path class="solid" d="M1 18l2-4 3 2v2z"/><path class="blue" d="M12 10a4.500 4.500 0 105 0M14 9h4v4"/></svg></button>
        <button class="on" aria-label="Sync"><svg viewBox="0 0 20 20"><path d="M1.500 1.500h17v17h-17zM1.500 5h17M5 9h10M13 7l2 2-2 2M15 14H5M7 12l-2 2 2 2"/></svg></button>
        <svg class="more" width="10" height="10"><use href="#chevron"/></svg>
        <span class="scale">3.75 in = 30'-0"</span>
        <span class="size">42.00 x 30.00 in</span>
        <span class="cursor">(-16.79, 3.25)</span>
    </footer>

</body>
</html>
```

FILE: styles.css
```css
* {
    box-sizing: border-box;
}

body {
    margin: 0;
    min-height: 100vh;
    display: flex;
    flex-direction: column;
    background-color: #2e2e2e;
    color: #f0f0f0;
    font-family: Roboto, sans-serif;
    font-size: 15px;
    line-height: 18px;
}

h1, h2, p {
    margin: 0;
}

button {
    display: flex;
    align-items: center;
    justify-content: center;
    padding: 0;
    border: 0;
    background: none;
    color: inherit;
    font: inherit;
}

svg {
    display: block;
    flex: none;
    fill: none;
    stroke: #f0f0f0;
    stroke-width: 1.3;
}

.sprite {
    position: absolute;
}

.solid {
    fill: #f0f0f0;
}

.small {
    stroke-width: 1;
}

.ruler {
    stroke: #5f5299;
    stroke-width: 1.5;
}

.off {
    color: #8a8a8a;
}

.off svg {
    stroke: #777;
}

.sep {
    width: 1px;
    height: 24px;
    background-color: #888;
}

/* top bars */
.menubar {
    display: flex;
    height: 25px;
    padding-bottom: 2px;
    background-color: #000;
    font-size: 17px;
}

.menus {
    display: flex;
    gap: 35px;
    padding-left: 22px;
    flex: 1;
}

.account {
    display: flex;
    align-items: center;
    gap: 5px;
    font-size: 15px;
    font-weight: 700;
}

.cut {
    stroke: #000;
    stroke-width: 2;
}

.window-buttons {
    display: flex;
    gap: 45px;
    padding: 0 21px 0 27px;
}

.filebar {
    display: flex;
    align-items: center;
    gap: 12px;
    height: 45px;
    padding-left: 9px;
    border-bottom: 1px solid #000;
}

.box {
    height: 31px;
    border: 1px solid #828282;
    border-radius: 4px;
    background-color: #3b3b3b;
}

.file-type {
    width: 55px;
    gap: 12px;
    background: none;
}

.new-page {
    width: 33px;
    background: none;
}

.plus {
    stroke: #e8b93c;
}

/* workspace */
.workspace {
    display: flex;
    flex: 1;
    border-bottom: 3px solid #000;
}

.rail {
    position: relative;
    display: flex;
    flex-direction: column;
    width: 36px;
    border-right: 1px solid #000;
}

.rail button {
    width: 34px;
    height: 35px;
}

.rail svg {
    width: 20px;
    height: 20px;
}

.rail .active {
    width: 36px;
    border: 3px solid #eac65f;
    background-color: #1b5784;
}

.rail .list {
    width: 35px;
    margin-top: auto;
    background-color: #1b5784;
}

.bold {
    stroke-width: 2;
}

/* yellow guide from the panel title to the active rail button */
.rail:not(.shapes)::after {
    content: "";
    position: absolute;
    left: 32px;
    top: 33px;
    width: 168px;
    height: 387px;
    border-left: 3px solid #eac65f;
    border-top: 3px solid #eac65f;
    pointer-events: none;
}

.panel {
    width: 580px;
    padding: 0 14px 0 13px;
    border-right: 2px solid #000;
}

h1 {
    display: flex;
    align-items: center;
    gap: 15px;
    height: 42px;
    font-size: 18px;
}

.tools {
    position: relative;
    display: flex;
    align-items: center;
    height: 56px;
    padding: 6px 0 0 9px;
}

.tool {
    width: 33px;
    height: 33px;
    margin-right: 12px;
}

.tool:has(+ .more) {
    margin-right: 10px;
}

.more {
    margin-right: 12px;
}

.tools .picked {
    margin-right: 11px;
    border: 1px solid #2b7cab;
    background-color: #263747;
}

.tools .marked {
    width: 43px;
    height: 41px;
    margin-right: 5px;
    border: 4px solid #eac65f;
    background-color: #1d4260;
}

.tools .sep {
    width: 2px;
    margin-right: 8px;
}

.tooltip {
    position: absolute;
    left: 85px;
    top: 51px;
    padding: 4px 7px;
    border: 1px solid #000;
    background-color: #3d3d3d;
    box-shadow: 2px 2px 3px #1c1c1c;
    font-size: 13px;
    font-weight: 500;
}

h2 {
    display: flex;
    align-items: center;
    gap: 17px;
    height: 55px;
    padding-left: 6px;
    font-size: 15px;
    font-weight: 400;
}

.form {
    display: grid;
    grid-template-columns: 67px 1fr;
    gap: 8px 12px;
    align-items: center;
}

.name {
    grid-column: 1;
    text-align: right;
}

.line, .form > .field {
    grid-column: 2;
}

.line {
    display: flex;
    align-items: center;
    height: 31px;
}

.spread {
    justify-content: space-between;
}

.add-scale {
    gap: 5px;
    width: 216px;
    padding-right: 4px;
    white-space: nowrap;
}

.wide {
    width: 114px;
}

.radios {
    gap: 18px;
    height: 24px;
}

.check {
    height: 25px;
}

.line label {
    display: flex;
    align-items: center;
    gap: 11px;
}

input[type="radio"], input[type="checkbox"] {
    appearance: none;
    width: 19px;
    height: 19px;
    margin: 0;
    border: 1px solid #828282;
    border-radius: 3px;
}

input[type="radio"] {
    border-radius: 50%;
}

input[type="radio"]:checked {
    background: radial-gradient(#fff 4px, transparent 5px);
}

.field, select {
    height: 31px;
    border: 1px solid #828282;
    border-radius: 4px;
    background: none;
    color: inherit;
    font: inherit;
}

.field {
    width: 100%;
    padding: 0 7px;
}

.scale-values {
    gap: 12px;
}

.scale-values .field {
    width: 75px;
}

.select {
    display: grid;
    align-items: center;
}

.select select {
    grid-area: 1 / 1;
    appearance: none;
    width: 100%;
    padding: 0 9px;
}

.select svg {
    grid-area: 1 / 1;
    justify-self: end;
    margin-right: 7px;
    pointer-events: none;
}

.in {
    width: 57px;
}

.ft {
    width: 81px;
}

.viewports {
    height: 147px;
    margin-top: -2px;
    border: 1px solid #777;
    border-width: 2px 1px;
    border-radius: 4px;
}

.viewport-tools {
    display: flex;
    align-items: center;
    gap: 31px;
    height: 50px;
    padding: 0 3px 0 15px;
}

.trash {
    gap: 9px;
    margin-left: auto;
}

/* document */
.document {
    display: flex;
    flex: 1;
    min-width: 0;
    flex-direction: column;
}

.tabs {
    display: flex;
    justify-content: space-between;
    height: 35px;
}

.tab {
    display: flex;
    align-items: center;
    gap: 16px;
    padding: 0 10px;
    border-right: 1px solid #000;
    background-color: #505050;
}

.tab-list {
    width: 42px;
}

.view {
    display: flex;
    flex: 1;
    padding-left: 15px;
    background-color: #4f4f4f;
}

.sheet {
    flex: 1;
    min-width: 0;
    margin-bottom: 3px;
    border-left: 2px solid #43708c;
    border-bottom: 5px solid #36597a;
    background-color: #fff;
}

.scroll {
    display: flex;
    justify-content: center;
    width: 21px;
    padding: 80px 0 25px;
    background-color: #efefef;
}

.scroll i {
    width: 3px;
    border-radius: 2px;
    background-color: #868686;
}

.viewbar, .status {
    display: flex;
    align-items: center;
}

.viewbar {
    height: 35px;
}

.viewbar button, .status button {
    width: 36px;
    height: 35px;
}

.viewbar svg, .status button svg {
    width: 20px;
    height: 20px;
}

.viewbar .sep {
    margin: 0 2px;
}

.on {
    background-color: #1b5784;
}

.viewbar .hand {
    margin-left: 46px;
}

.page-name {
    flex: 1;
    min-width: 100px;
    height: 26px;
    margin: 0 1px 0 2px;
    border: 1px solid #828282;
    border-radius: 3px;
    background: none;
    color: inherit;
    font: inherit;
    text-align: center;
}

.page-size {
    display: flex;
    align-items: center;
    gap: 21px;
    margin-left: 56px;
    padding-right: 13px;
    font-size: 17px;
}

.shapes {
    align-items: center;
    width: 34px;
    border: 0;
}

.shapes button {
    height: 36px;
}

.grip {
    width: 28px;
    height: 2px;
    margin: 6px 0 4px;
    background: repeating-linear-gradient(90deg, #999 0 2px, transparent 2px 4px);
}

.status {
    height: 38px;
    margin-top: 3px;
    padding: 0 35px 2px 2px;
    border-top: 1px solid #000;
}

.ready {
    flex: 1;
}

.status .more {
    margin: 0 34px 0 2px;
}

.size {
    margin: 0 55px 0 32px;
}

.blue {
    stroke: #2b7cab;
}

/* floor plan */
.plan {
    width: 100%;
    stroke: none;
    font-family: "Liberation Sans", sans-serif;
}

.plan path, .plan rect, .plan circle, .plan ellipse {
    fill: none;
    stroke: #111;
    stroke-width: 1;
}

.plan .wall {
    stroke-width: 2.3;
}

.plan .outer {
    stroke: #000;
    stroke-width: 2.3;
}

.plan .frame {
    stroke-width: 1.5;
}

.plan .gap {
    stroke: #fff;
    stroke-width: 3;
}

.plan .thin {
    stroke: #333;
    stroke-width: 0.7;
}

.plan .dark {
    stroke: #111;
    stroke-width: 0.9;
}

.plan .border {
    stroke: #222;
}

.plan .slab {
    fill: #222;
    stroke: none;
}

.plan .slab-mark {
    stroke: #999;
    stroke-dasharray: 1 1;
}

.plan .sink {
    stroke: #000;
    stroke-width: 1.5;
}

.plan .tag, .plan .bubbles circle {
    fill: #fff;
    stroke-width: 0.8;
}

.plan .mark {
    stroke: #777;
    stroke-dasharray: 1 0.5;
}

.plan .dots {
    stroke-width: 0.9;
    stroke-dasharray: 2 1;
}

.plan .dashes {
    stroke-dasharray: 5 3;
}

.plan .axis {
    stroke: #222;
    stroke-dasharray: 20 4 4 4;
}

.plan .steps {
    stroke: #000;
    stroke-width: 12;
    stroke-dasharray: 1 2;
}

.plan .posts {
    stroke: #000;
    stroke-width: 4;
    stroke-dasharray: 3 108.2;
}

.tiny {
    fill: #555;
    font-size: 4px;
    text-anchor: middle;
}

.rooms {
    fill: #111;
    font-family: Roboto, sans-serif;
    font-size: 5px;
    font-weight: 500;
    text-anchor: middle;
}

.plan .area-yellow {
    fill: #ffcb4b;
    fill-opacity: 0.85;
    stroke: #5a5a2a;
}

.plan .area-blue {
    fill: #326577;
    fill-opacity: 0.92;
    stroke: #d6bc5a;
}

.value {
    fill: #3f4a3c;
    font-size: 12px;
    text-anchor: middle;
}

.gold {
    fill: #e6d15c;
}

.plan .logo-frame {
    stroke: #8fb0b0;
    stroke-width: 3;
}

.plan .logo-line {
    stroke: #dce8e8;
}

.brighter {
    fill: #437880;
    font-family: Roboto, sans-serif;
    font-size: 15px;
    font-weight: 700;
    letter-spacing: 3px;
}

.tagline {
    fill: #6f9a9c;
    font-size: 4px;
}

.plan .blue-fill {
    fill: #0f86d8;
    stroke: none;
}

.bluebeam {
    fill: #0f86d8;
    font-family: Roboto, sans-serif;
    font-size: 23px;
    font-weight: 700;
}

.partner {
    fill: #333;
    font-family: Roboto, sans-serif;
    font-size: 7px;
    font-weight: 700;
}

.head, .info {
    fill: #111;
    font-size: 8px;
}

.head, .notice, .number {
    fill: #111;
    font-weight: 700;
}

.fine {
    fill: #333;
    font-size: 5px;
}

.notice {
    font-size: 10px;
}

.number {
    font-size: 20px;
}

.notice, .number, .mid {
    text-anchor: middle;
}

.end {
    text-anchor: end;
}
```
